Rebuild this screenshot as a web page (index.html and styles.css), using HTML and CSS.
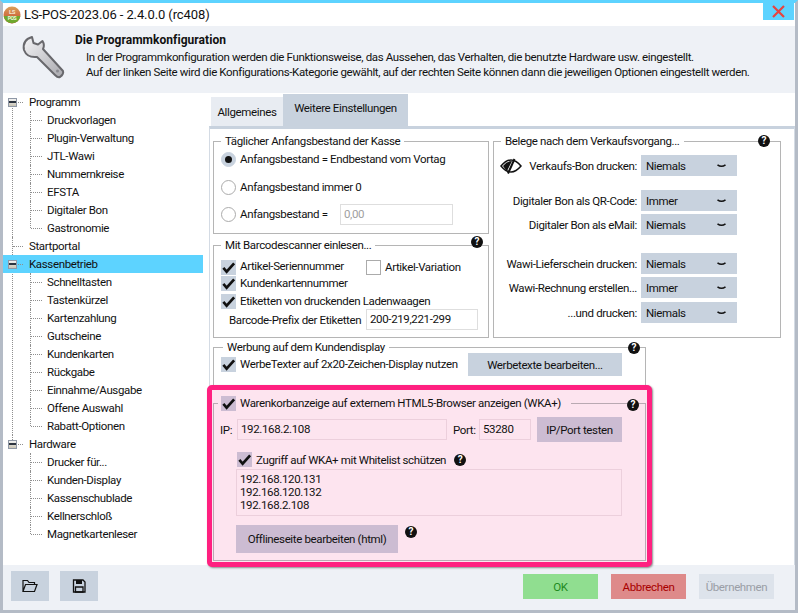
FILE: index.html
```html
<!DOCTYPE html>
<html lang="de">
<head>
    <meta charset="UTF-8">
    <title>LS-POS Programmkonfiguration</title>
    <link rel="stylesheet" href="styles.css">
</head>
<body>
    <svg class="defs" width="0" height="0" aria-hidden="true">
        <symbol id="tick" viewBox="0 0 16 16">
            <path d="M2.5 8.5 L6 12.5 L14 3.5" fill="none" stroke="#111" stroke-width="2.8"/>
        </symbol>
        <symbol id="chev" viewBox="0 0 9 4">
            <path d="M0.5 0.8 Q4.5 3.6 8.5 0.8" fill="none" stroke="#111" stroke-width="1.6"/>
        </symbol>
    </svg>

    <div class="window">
        <div class="titlebar">
            <svg class="logo" viewBox="0 0 18 18">
                <defs>
                    <linearGradient id="logoTop" x1="0" y1="0" x2="0" y2="1">
                        <stop offset="0" stop-color="#d9a05a"/>
                        <stop offset="1" stop-color="#c8432a"/>
                    </linearGradient>
                </defs>
                <circle cx="9" cy="9" r="8.5" fill="url(#logoTop)"/>
                <path d="M0.6 10 H17.4 A8.5 8.5 0 0 1 0.6 10 Z" fill="#6fa82e"/>
                <text x="9" y="7.5" class="logo-top">LS</text>
                <text x="9" y="13.5" class="logo-bot">POS</text>
            </svg>
            <span class="apptitle">LS-POS-2023.06 - 2.4.0.0 (rc408)</span>
            <button class="close" type="button" aria-label="Schließen">
                <svg width="13" height="13" viewBox="0 0 13 13"><path d="M1 1 L12 12 M12 1 L1 12" stroke="#e8433f" stroke-width="2.2"/></svg>
            </button>
        </div>

        <div class="header">
            <svg class="wrench" viewBox="20 34 46 46">
                <defs>
                    <linearGradient id="steel" x1="0" y1="0" x2="1" y2="1">
                        <stop offset="0" stop-color="#f4f4f6"/>
                        <stop offset="1" stop-color="#a9a9ae"/>
                    </linearGradient>
                </defs>
                <path d="M32 37 L33.5 43 L38 44.5 L42.5 41 Q45 45 43 49 L63 71 Q64 74 60 77 Q58 78 55 75 L37 57 Q27 58 24 50 Q22 40 32 37 Z" fill="url(#steel)" stroke="#68686c" stroke-width="2" stroke-linejoin="round"/>
                <circle cx="57.5" cy="71" r="1.5" fill="#8a8a90"/>
            </svg>
            <div class="header-text">
                <h1>Die Programmkonfiguration</h1>
                <p>In der Programmkonfiguration werden die Funktionsweise, das Aussehen, das Verhalten, die benutzte Hardware usw. eingestellt.</p>
                <p>Auf der linken Seite wird die Konfigurations-Kategorie gewählt, auf der rechten Seite können dann die jeweiligen Optionen eingestellt werden.</p>
            </div>
        </div>

        <div class="content">
            <ul class="tree">
                <li>
                    <div class="node"><span class="toggle"></span>Programm</div>
                    <ul>
                        <li><div class="node">Druckvorlagen</div></li>
                        <li><div class="node">Plugin-Verwaltung</div></li>
                        <li><div class="node">JTL-Wawi</div></li>
                        <li><div class="node">Nummernkreise</div></li>
                        <li><div class="node">EFSTA</div></li>
                        <li><div class="node">Digitaler Bon</div></li>
                        <li><div class="node">Gastronomie</div></li>
                    </ul>
                </li>
                <li><div class="node">Startportal</div></li>
                <li>
                    <div class="node selected"><span class="toggle"></span>Kassenbetrieb</div>
                    <ul>
                        <li><div class="node">Schnelltasten</div></li>
                        <li><div class="node">Tastenkürzel</div></li>
                        <li><div class="node">Kartenzahlung</div></li>
                        <li><div class="node">Gutscheine</div></li>
                        <li><div class="node">Kundenkarten</div></li>
                        <li><div class="node">Rückgabe</div></li>
                        <li><div class="node">Einnahme/Ausgabe</div></li>
                        <li><div class="node">Offene Auswahl</div></li>
                        <li><div class="node">Rabatt-Optionen</div></li>
                    </ul>
                </li>
                <li>
                    <div class="node"><span class="toggle"></span>Hardware</div>
                    <ul>
                        <li><div class="node">Drucker für...</div></li>
                        <li><div class="node">Kunden-Display</div></li>
                        <li><div class="node">Kassenschublade</div></li>
                        <li><div class="node">Kellnerschloß</div></li>
                        <li><div class="node">Magnetkartenleser</div></li>
                    </ul>
                </li>
            </ul>

            <div class="main">
                <div class="tabs">
                    <div class="tab">Allgemeines</div>
                    <div class="tab active">Weitere Einstellungen</div>
                </div>
                <div class="panel">
                    <div class="columns">
                        <div class="col-left">
                            <fieldset class="group group-cash">
                                <legend>Täglicher Anfangsbestand der Kasse</legend>
                                <div class="row radio-row"><span class="radio on"></span>Anfangsbestand = Endbestand vom Vortag</div>
                                <div class="row radio-row two"><span class="radio"></span>Anfangsbestand immer 0</div>
                                <div class="row radio-row three"><span class="radio"></span><span class="cash-label">Anfangsbestand =</span><span class="field cash-field">0,00</span></div>
                            </fieldset>

                            <fieldset class="group group-scan">
                                <legend>Mit Barcodescanner einlesen...</legend>
                                <span class="help">?</span>
                                <div class="row check-row first">
                                    <span class="check-cell"><span class="check"><svg><use href="#tick"/></svg></span>Artikel-Seriennummer</span>
                                    <span class="check empty"></span>Artikel-Variation
                                </div>
                                <div class="row check-row"><span class="check"><svg><use href="#tick"/></svg></span>Kundenkartennummer</div>
                                <div class="row check-row third"><span class="check"><svg><use href="#tick"/></svg></span>Etiketten von druckenden Ladenwaagen</div>
                                <div class="row prefix-row"><span class="prefix-label">Barcode-Prefix der Etiketten</span><span class="field prefix-field">200-219,221-299</span></div>
                            </fieldset>
                        </div>

                        <fieldset class="group group-receipts">
                            <legend>Belege nach dem Verkaufsvorgang...</legend>
                            <span class="help">?</span>
                            <div class="row select-row">
                                <svg class="eye" viewBox="0 0 22 16">
                                    <path d="M1 8 Q6 2 11 2 Q16 2 21 8 Q16 14 11 14 Q6 14 1 8 Z" fill="none" stroke="#111" stroke-width="1.5"/>
                                    <path d="M3 8 Q7 3 12 3 L7 13 Q5 11 3 8 Z" fill="#111"/>
                                    <path d="M14.5 1 L8 15.5" stroke="#111" stroke-width="2"/>
                                </svg>
                                <label>Verkaufs-Bon drucken:</label><span class="select">Niemals<svg><use href="#chev"/></svg></span>
                            </div>
                            <div class="row select-row gap-14"><label>Digitaler Bon als QR-Code:</label><span class="select">Immer<svg><use href="#chev"/></svg></span></div>
                            <div class="row select-row gap-3"><label>Digitaler Bon als eMail:</label><span class="select">Niemals<svg><use href="#chev"/></svg></span></div>
                            <div class="row select-row gap-18"><label>Wawi-Lieferschein drucken:</label><span class="select">Niemals<svg><use href="#chev"/></svg></span></div>
                            <div class="row select-row gap-3"><label>Wawi-Rechnung erstellen...</label><span class="select">Immer<svg><use href="#chev"/></svg></span></div>
                            <div class="row select-row gap-4"><label>...und drucken:</label><span class="select">Niemals<svg><use href="#chev"/></svg></span></div>
                        </fieldset>
                    </div>

                    <fieldset class="group group-ads">
                        <legend>Werbung auf dem Kundendisplay</legend>
                        <span class="help">?</span>
                        <div class="row ads-row">
                            <span class="ads-label"><span class="check"><svg><use href="#tick"/></svg></span>WerbeTexter auf 2x20-Zeichen-Display nutzen</span>
                            <span class="btn ads-btn">Werbetexte bearbeiten...</span>
                        </div>
                    </fieldset>

                    <div class="marker">
                        <fieldset class="group group-wka">
                            <legend><span class="check pink"><svg><use href="#tick"/></svg></span>Warenkorbanzeige auf externem HTML5-Browser anzeigen (WKA+)</legend>
                            <span class="help">?</span>
                            <div class="row ip-row">
                                <span class="ip-label">IP:</span><span class="field ip-field">192.168.2.108</span>
                                <span class="port-label">Port:</span><span class="field port-field">53280</span>
                                <span class="btn pink test-btn">IP/Port testen</span>
                            </div>
                            <div class="row list-row">
                                <span class="check pink"><svg><use href="#tick"/></svg></span>Zugriff auf WKA+ mit Whitelist schützen<span class="help inline">?</span>
                            </div>
                            <div class="field iplist">192.168.120.131<br>192.168.120.132<br>192.168.2.108</div>
                            <div class="row offline-row">
                                <span class="btn pink offline-btn">Offlineseite bearbeiten (html)</span>
                                <span class="help inline">?</span>
                            </div>
                        </fieldset>
                    </div>
                </div>
            </div>
        </div>

        <div class="footer">
            <span class="btn tool">
                <svg width="16" height="14" viewBox="0 0 16 14"><path d="M1 12.5 V1.5 H5.5 L7 3.5 H12.5 V5.5 M1 12.5 L3.5 5.5 H15 L12.5 12.5 Z" fill="none" stroke="#111" stroke-width="1.2"/></svg>
            </span>
            <span class="btn tool">
                <svg width="14" height="14" viewBox="0 0 14 14"><path d="M1.5 1 H11 L13 3 V13 H1.5 Z" fill="none" stroke="#111" stroke-width="1.3"/><path d="M4 1 H10 V5 H4 Z" fill="#111"/><path d="M3.5 8 H11 V13 H3.5 Z" fill="none" stroke="#111" stroke-width="1.3"/></svg>
            </span>
            <div class="actions">
                <span class="btn act ok">OK</span>
                <span class="btn act cancel">Abbrechen</span>
                <span class="btn act apply">Übernehmen</span>
            </div>
        </div>
    </div>
</body>
</html>
```
FILE: styles.css
```css
* {
    box-sizing: border-box;
}

body {
    margin: 0;
    font-family: Roboto, "Liberation Sans", sans-serif;
    font-size: 11.5px;
    letter-spacing: -0.36px;
    line-height: 14px;
    white-space: nowrap;
    color: #111;
    background: #fff;
}

.defs {
    position: absolute;
}

.window {
    width: 798px;
    height: 613px;
    display: flex;
    flex-direction: column;
    border-top: 3px solid #5dd3ff;
    border-left: 3px solid #b4bbc6;
    border-right: 3px solid #b4bbc6;
    border-bottom: 3px solid #b4bbc6;
    overflow: hidden;
}

/* title bar */
.titlebar {
    height: 23px;
    display: flex;
    align-items: center;
    position: relative;
}

.logo {
    width: 18px;
    height: 18px;
    margin-right: 3px;
}

.logo text {
    text-anchor: middle;
    font-weight: bold;
}

.logo-top {
    font-size: 6px;
    fill: #f6e6d0;
}

.logo-bot {
    font-size: 5px;
    fill: #f2f8e0;
}

.apptitle {
    font-size: 13px;
    letter-spacing: -0.1px;
}

.close {
    position: absolute;
    top: 0;
    right: 1px;
    width: 31px;
    height: 17px;
    padding: 0;
    border: none;
    background: #5dd3ff;
    display: flex;
    justify-content: center;
    align-items: center;
}

/* header */
.header {
    height: 67px;
    display: flex;
    background: #eef1f6;
}

.wrench {
    width: 46px;
    height: 46px;
    margin: 8px 9px 0 17px;
}

.header-text {
    padding-top: 7px;
}

.header-text h1 {
    margin: 0 0 3px;
    font-size: 12px;
    letter-spacing: 0.05px;
    line-height: 14px;
    font-weight: bold;
}

.header-text p {
    margin: 0 0 0 11px;
    line-height: 15px;
}

/* left tree */
.content {
    flex: 1;
    display: flex;
    min-height: 0;
}

.tree,
.tree ul {
    list-style: none;
    margin: 0;
    padding: 0;
}

.tree {
    width: 206px;
    padding-right: 6px;
    flex: none;
}

.tree li {
    position: relative;
}

.tree > li::before {
    content: "";
    position: absolute;
    left: 9px;
    top: 0;
    bottom: 0;
    border-left: 1px dotted #8f8f8f;
}

.tree > li:first-child::before {
    top: 9px;
}

.tree > li:last-child::before {
    bottom: auto;
    height: 9px;
}

.tree ul li::before {
    content: "";
    position: absolute;
    left: 27px;
    top: 0;
    bottom: 0;
    border-left: 1px dotted #8f8f8f;
}

.tree ul li:last-child::before {
    bottom: auto;
    height: 9px;
}

.node {
    position: relative;
    height: 18px;
    line-height: 18px;
    padding-left: 26px;
}

.node::before {
    content: "";
    position: absolute;
    left: 10px;
    top: 9px;
    width: 10px;
    border-top: 1px dotted #8f8f8f;
}

.tree ul .node {
    padding-left: 44px;
}

.tree ul .node::before {
    left: 28px;
    width: 11px;
}

.selected {
    background: #5dd3ff;
}

.toggle {
    position: absolute;
    z-index: 1;
    left: 5px;
    top: 5px;
    width: 9px;
    height: 9px;
    border: 1px solid #8f98a6;
    background: linear-gradient(#f2f2f2, #c9c4b4);
}

.toggle::after {
    content: "";
    position: absolute;
    left: 0;
    right: 0;
    top: 2px;
    border-top: 2px solid #2c3440;
}

/* tabs and panel */
.main {
    flex: 1;
    min-width: 0;
    display: flex;
    flex-direction: column;
}

.tabs {
    height: 33px;
    padding: 1px 0 0 2px;
    display: flex;
    align-items: flex-end;
}

.tab {
    width: 72px;
    height: 29px;
    line-height: 30px;
    text-align: center;
    background: #e8ecf2;
}

.tab.active {
    width: 125px;
    height: 32px;
    line-height: 28px;
    background: #c8d2de;
}

.panel {
    flex: 1;
    border-top: 3px solid #c8d2de;
    border-left: 1px solid #d4dbe4;
    border-right: 1px solid #d4dbe4;
    padding: 5px 0 0 3px;
}

.columns {
    display: flex;
    gap: 4px;
}

.col-left {
    width: 276px;
    display: flex;
    flex-direction: column;
    gap: 4px;
}

/* group boxes */
.group {
    position: relative;
    margin: 0;
    padding: 0 0 0 7px;
    min-width: 0;
    border: 1px solid #b5b5b5;
}

.group legend {
    margin-left: 0;
    padding: 0 4px;
    line-height: 14px;
}

.row {
    display: flex;
    align-items: center;
}

.help {
    position: absolute;
    width: 12px;
    height: 12px;
    border-radius: 50%;
    background: #111;
    color: #fff;
    font-size: 10px;
    letter-spacing: 0;
    font-weight: bold;
    line-height: 12px;
    text-align: center;
}

.help.inline {
    position: static;
    flex: none;
}

.field {
    display: block;
    height: 21px;
    line-height: 19px;
    padding-left: 3px;
    border: 1px solid #dedede;
    background: #fff;
}

/* starting cash */
.group-cash {
    height: 100px;
}

.radio-row {
    height: 20px;
    margin-top: 1px;
}

.radio-row.two {
    margin-top: 8px;
}

.radio-row.three {
    margin-top: 7px;
}

.radio {
    position: relative;
    width: 15px;
    height: 15px;
    margin-right: 4px;
    flex: none;
    border-radius: 50%;
    border: 1px solid #ababab;
    background: #fff;
}

.radio.on {
    border-color: #c8d2de;
    background: #c8d2de;
}

.radio.on::after {
    content: "";
    position: absolute;
    left: 3px;
    top: 3px;
    width: 7px;
    height: 7px;
    border-radius: 50%;
    background: #111;
}

.cash-label {
    width: 100px;
}

.cash-field {
    width: 113px;
    color: #a0a0a0;
}

/* checkboxes */
.check {
    width: 15px;
    height: 15px;
    margin-right: 4px;
    flex: none;
    display: inline-block;
    background: #c8d2de;
    vertical-align: middle;
}

.check svg {
    display: block;
    width: 15px;
    height: 15px;
}

.check.pink {
    background: #ccbcd2;
}

.check.empty {
    background: #fff;
    border: 1px solid #ababab;
}

.check-row {
    height: 16px;
    margin-top: 1px;
}

.check-row.first {
    margin-top: 7px;
    margin-bottom: -1px;
}

.check-row.third {
    margin-top: 2px;
}

.check-cell {
    width: 145px;
}

.group-scan {
    height: 100px;
}

.group-scan .help {
    right: 5px;
    top: -16px;
}

.prefix-row {
    height: 21px;
}

.prefix-label {
    width: 145px;
    padding-left: 8px;
}

.prefix-field {
    width: 112px;
}

/* receipts */
.group-receipts {
    width: 288px;
    height: 204px;
    padding-left: 0;
}

.group-receipts legend {
    margin-left: 7px;
}

.group-receipts .help {
    right: 10px;
    top: -13px;
}

.select-row {
    position: relative;
    height: 21px;
    justify-content: flex-end;
    padding-right: 43px;
}

.select-row:first-of-type {
    margin-top: 7px;
}

.select-row label {
    margin-right: 4px;
}

.gap-14 {
    margin-top: 14px;
}

.gap-18 {
    margin-top: 18px;
}

.gap-3 {
    margin-top: 3px;
}

.gap-4 {
    margin-top: 4px;
}

.eye {
    position: absolute;
    left: 6px;
    top: 3px;
    width: 22px;
    height: 16px;
}

.select {
    width: 96px;
    height: 21px;
    line-height: 20px;
    padding: 0 11px 0 5px;
    display: flex;
    justify-content: space-between;
    align-items: center;
    background: #c8d2de;
}

.select svg {
    width: 9px;
    height: 4px;
}

/* buttons */
.btn {
    display: flex;
    justify-content: center;
    align-items: center;
    background: #c8d2de;
}

.btn.pink {
    background: #ccbcd2;
}

/* ads */
.group-ads {
    width: 433px;
    height: 45px;
    margin-top: 2px;
    border-bottom: none;
}

.group-ads legend {
    margin-left: 2px;
}

.group-ads .help {
    right: 5px;
    top: -12px;
}

.ads-row {
    height: 23px;
    margin-top: -1px;
}

.ads-label {
    width: 247px;
}

.ads-btn {
    width: 154px;
    height: 23px;
}

/* highlighted block */
.marker {
    position: relative;
    z-index: 2;
    width: 445px;
    height: 182px;
    margin-left: -6px;
    padding: 0 1px;
    border: 5px solid #ff2080;
    border-radius: 5px;
    background: #fde4ef;
    box-shadow: 1px 1px 2px #8d8d8d;
}

.group-wka {
    height: 166px;
    margin-top: 5px;
    padding-left: 0;
    border-color: #b9a9b2;
}

.group-wka legend {
    margin-left: 4px;
    padding: 0 10px 0 3px;
    line-height: 16px;
    display: flex;
    align-items: center;
}

.group-wka > .help {
    right: 6px;
    top: -12px;
}

.group-wka .field {
    background: #fde4ef;
    border-color: #eccfdc;
}

.ip-row {
    height: 25px;
    margin-top: 6px;
    padding-left: 6px;
}

.ip-label {
    width: 17px;
}

.ip-field {
    width: 210px;
}

.port-label {
    width: 26px;
    margin-left: 6px;
}

.port-field {
    width: 52px;
}

.test-btn {
    width: 85px;
    height: 25px;
    margin-left: 6px;
}

.list-row {
    height: 15px;
    margin-top: 10px;
    padding-left: 23px;
}

.list-row .help {
    margin-left: 8px;
}

.iplist {
    width: 386px;
    height: 47px;
    margin: 2px 0 0 22px;
    line-height: 13px;
    padding: 3px;
}

.offline-row {
    margin: 9px 0 0 22px;
    align-items: flex-start;
}

.offline-btn {
    width: 162px;
    height: 28px;
}

.offline-row .help {
    margin: 1px 0 0 7px;
}

/* footer */
.footer {
    height: 45px;
    padding: 6px 21px 0 8px;
    display: flex;
    align-items: flex-start;
    gap: 11px;
    background: #eef1f6;
}

.tool {
    width: 38px;
    height: 30px;
}

.actions {
    margin: 3px 0 0 auto;
    display: flex;
    gap: 13px;
}

.act {
    width: 75px;
    height: 25px;
}

.ok {
    background: #90de90;
    color: #1f8a1f;
}

.cancel {
    background: #de8a8a;
    color: #a80000;
}

.apply {
    background: #dde3eb;
    color: #9a9ea6;
}
```
